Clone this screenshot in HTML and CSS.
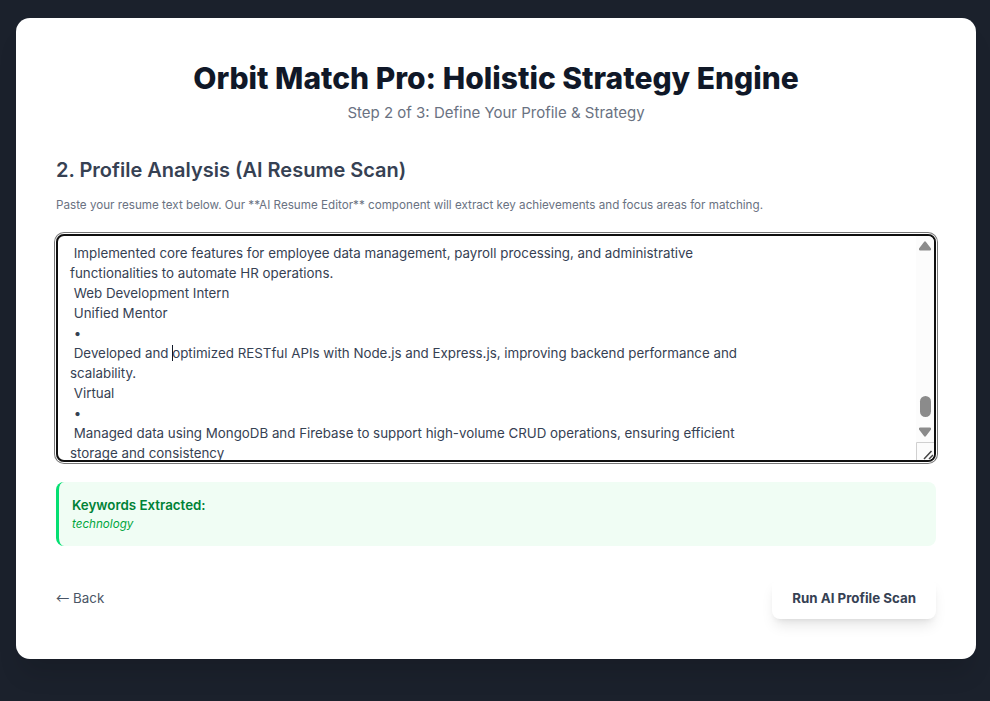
FILE: index.html
```html
<!DOCTYPE html>
<html lang="en">
<head>
<meta charset="utf-8">
<meta name="viewport" content="width=device-width, initial-scale=1">
<title>Orbit Match Pro</title>
<link rel="stylesheet" href="styles.css">
</head>
<body>
<main class="card">
  <header class="header">
    <h1 class="title">Orbit Match Pro: Holistic Strategy Engine</h1>
    <p class="step">Step 2 of 3: Define Your Profile &amp; Strategy</p>
  </header>
  <section>
    <h2 class="heading">2. Profile Analysis (AI Resume Scan)</h2>
    <label class="hint" for="resume">Paste your resume text below. Our **AI Resume Editor** component will extract key achievements and focus areas for matching.</label>
    <div class="editor">
      <textarea class="resume" id="resume" spellcheck="false"> Implemented core features for employee data management, payroll processing, and administrative
functionalities to automate HR operations.
 Web Development Intern
 Unified Mentor
 •
 Developed and optimized RESTful APIs with Node.js and Express.js, improving backend performance and
scalability.
 Virtual
 •
 Managed data using MongoDB and Firebase to support high-volume CRUD operations, ensuring efficient
storage and consistency</textarea>
      <span class="caret"></span>
      <div class="scrollbar" aria-hidden="true">
        <svg class="arrow" viewBox="0 0 18 18"><path d="M8 6Q9 4.500 10 6L15 12.500Q15.500 14.500 14 14.500H4Q2.500 14.500 3 12.500Z"/></svg>
        <span class="thumb"></span>
        <svg class="arrow" viewBox="0 0 18 18"><path d="M8 12Q9 13.500 10 12L15 5.500Q15.500 3.500 14 3.500H4Q2.500 3.500 3 5.500Z"/></svg>
        <svg class="grip" viewBox="0 0 18 18"><path d="M.5 18V.5H18" fill="none" stroke="#d0d0d0"/><path d="M8 17L15.500 9M13 17L17 13" fill="none" stroke="#444" stroke-width="1.500"/></svg>
      </div>
    </div>
  </section>
  <section class="keywords">
    <h3 class="keywords-title">Keywords Extracted:</h3>
    <p class="keywords-list">technology</p>
  </section>
  <footer class="actions">
    <button class="back" type="button"><span class="back-arrow">←</span> Back</button>
    <button class="run" type="button">Run AI Profile Scan</button>
  </footer>
</main>
</body>
</html>
```
FILE: styles.css
```css
* {
  box-sizing: border-box;
  margin: 0;
}

body {
  padding: 18px 14px 42px 16px;
  background: #1b212c;
  color: #364153;
  font: 14px/20px Inter, "Liberation Sans", sans-serif;
}

.card {
  padding: 40px;
  border-radius: 14px;
  background: #fff;
  box-shadow: 0 20px 24px -6px rgb(0 0 0 / 12%);
}

.header {
  margin-bottom: 32px;
  text-align: center;
}

.title {
  color: #101828;
  font-size: 30px;
  font-weight: 800;
  line-height: 40px;
}

.step {
  margin-top: 4px;
  color: #6a7282;
  font-size: 15px;
  line-height: 22px;
}

.heading {
  margin-bottom: 12px;
  font-size: 20px;
  font-weight: 600;
  line-height: 28px;
}

.hint {
  display: block;
  margin-bottom: 20px;
  color: #6a7282;
  font-size: smaller;
  line-height: 18px;
}

.editor {
  position: relative;
  display: flex;
  border-radius: 8px;
  box-shadow: 0 0 0 1px #fff, 0 0 0 2px #777;
}

.resume {
  width: 100%;
  height: 228px;
  padding: 7px 24px 0 12px;
  border: 2px solid #101010;
  border-radius: 8px;
  outline: none;
  overflow: hidden;
  resize: none;
  background: #fff;
  color: #364153;
  font: 10pt/20px Inter, "Liberation Sans", sans-serif;
}

.caret {
  position: absolute;
  top: 111px;
  left: 116px;
  width: 1px;
  height: 16px;
  background: #101828;
}

.scrollbar {
  position: absolute;
  inset: 2px 2px 2px auto;
  display: flex;
  flex-direction: column;
  align-items: center;
  width: 18px;
  border-radius: 0 6px 6px 0;
  overflow: hidden;
  background: #fcfcfc;
}

.arrow,
.grip {
  flex: none;
  width: 18px;
  height: 18px;
  fill: #8b8b8b;
}

.thumb {
  width: 11px;
  height: 21px;
  margin: auto 0 7px;
  border-radius: 6px;
  background: #8b8b8b;
}

.keywords {
  margin-top: 20px;
  padding: 14px 13px 12px;
  border-left: 3px solid #05df72;
  border-radius: 8px;
  background: #f0fdf4;
}

.keywords-title {
  color: #008236;
  font-size: 10pt;
  font-weight: 600;
  line-height: 18px;
}

.keywords-list {
  color: #00a63e;
  font-size: smaller;
  font-style: italic;
  line-height: 20px;
}

.actions {
  display: flex;
  align-items: baseline;
  justify-content: space-between;
  margin-top: 32px;
}

.back,
.run {
  border: 0;
  background: #fff;
  font: 10pt/20px Inter, "Liberation Sans", sans-serif;
}

.back {
  padding: 0;
  color: #4a5565;
}

.back-arrow {
  font-family: "Noto Sans CJK JP", sans-serif;
  line-height: 1;
}

.run {
  padding: 10px 20px 11px;
  border-radius: 8px;
  box-shadow: 0 9px 14px -3px rgb(0 0 0 / 10%), 0 4px 6px -4px rgb(0 0 0 / 10%);
  color: #364153;
  font-weight: 700;
}
```
